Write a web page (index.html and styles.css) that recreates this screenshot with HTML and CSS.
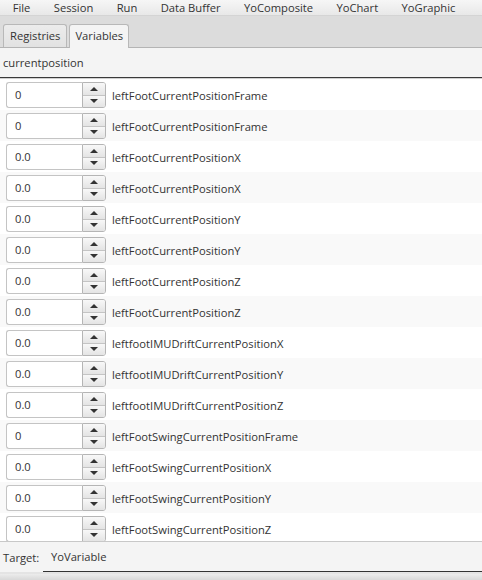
FILE: index.html
```html
<!DOCTYPE html>
<html lang="en">
<head>
  <meta charset="UTF-8">
  <title>Variables</title>
  <link rel="stylesheet" href="styles.css">
</head>
<body>
  <div class="window">
    <div class="menubar">
      <span class="menu">File</span>
      <span class="menu">Session</span>
      <span class="menu">Run</span>
      <span class="menu">Data Buffer</span>
      <span class="menu">YoComposite</span>
      <span class="menu">YoChart</span>
      <span class="menu">YoGraphic</span>
    </div>

    <div class="tab-header">
      <div class="tab">Registries</div>
      <div class="tab selected">Variables</div>
    </div>

    <div class="search">
      <div class="search-field">currentposition</div>
    </div>

    <div class="list" id="list"></div>

    <div class="target">
      <span class="target-label">Target:</span>
      <div class="target-field">YoVariable</div>
    </div>
    <div class="bottom-strip"></div>
  </div>

  <script>
    const variables = [
      ['0', 'leftFootCurrentPositionFrame'],
      ['0', 'leftFootCurrentPositionFrame'],
      ['0.0', 'leftFootCurrentPositionX'],
      ['0.0', 'leftFootCurrentPositionX'],
      ['0.0', 'leftFootCurrentPositionY'],
      ['0.0', 'leftFootCurrentPositionY'],
      ['0.0', 'leftFootCurrentPositionZ'],
      ['0.0', 'leftFootCurrentPositionZ'],
      ['0.0', 'leftfootIMUDriftCurrentPositionX'],
      ['0.0', 'leftfootIMUDriftCurrentPositionY'],
      ['0.0', 'leftfootIMUDriftCurrentPositionZ'],
      ['0', 'leftFootSwingCurrentPositionFrame'],
      ['0.0', 'leftFootSwingCurrentPositionX'],
      ['0.0', 'leftFootSwingCurrentPositionY'],
      ['0.0', 'leftFootSwingCurrentPositionZ']
    ];

    const list = document.getElementById('list');
    variables.forEach(([value, name]) => {
      const row = document.createElement('div');
      row.className = 'row';
      row.innerHTML =
        '<div class="spinner">' +
          '<div class="spinner-value">' + value + '</div>' +
          '<div class="spinner-buttons">' +
            '<div class="arrow-btn"><span class="arrow up"></span></div>' +
            '<div class="arrow-btn"><span class="arrow down"></span></div>' +
          '</div>' +
        '</div>' +
        '<span class="var-name">' + name + '</span>';
      list.appendChild(row);
    });
  </script>
</body>
</html>
```

FILE: styles.css
```css
* {
  margin: 0;
  padding: 0;
  box-sizing: border-box;
}

body {
  font-family: 'Open Sans', 'Noto Sans', sans-serif;
  font-size: 11.2px;
  color: #333;
  background-color: #f4f4f4;
}

.window {
  width: 482px;
  height: 580px;
  overflow: hidden;
  display: flex;
  flex-direction: column;
}

/* menu bar */
.menubar {
  height: 16px;
  display: flex;
  align-items: center;
  padding-left: 1px;
  background: linear-gradient(#f6f6f6, #e8e8e8);
  border-bottom: 1px solid #d4d4d4;
  flex-shrink: 0;
  white-space: nowrap;
}

.menu {
  padding: 0 11.7px;
  line-height: 15px;
}

/* tabs */
.tab-header {
  height: 32px;
  display: flex;
  align-items: flex-end;
  gap: 2px;
  padding-left: 3px;
  background-color: #dcdcdc;
  border-bottom: 1px solid #b4b4b4;
  flex-shrink: 0;
}

.tab {
  height: 23px;
  padding: 0 6px;
  line-height: 22px;
  border: 1px solid #b8b8b8;
  border-bottom: none;
  border-radius: 3px 3px 0 0;
  background: linear-gradient(#ececec, #e2e2e2);
}

.tab.selected {
  height: 24px;
  padding: 0 5px;
  margin-bottom: -1px;
  background: #f4f4f4;
}

/* search */
.search {
  height: 31px;
  background-color: #f4f4f4;
  border-bottom: 1px solid #d0d0d0;
  flex-shrink: 0;
}

.search-field {
  height: 30px;
  line-height: 30px;
  padding-left: 3px;
  border-bottom: 1px solid #3a3a3a;
}

/* variable list */
.list {
  height: 462px;
  overflow: hidden;
  background-color: #fff;
  flex-shrink: 0;
}

.row {
  height: 31px;
  display: flex;
  align-items: center;
  padding-left: 6px;
  padding-top: 1px;
}

.row:nth-child(even) {
  background-color: #f9f9f9;
}

.spinner {
  display: flex;
  width: 100px;
  height: 26px;
}

.spinner-value {
  width: 76px;
  padding-left: 8px;
  line-height: 24px;
  background-color: #fff;
  border: 1px solid #c4c4c4;
  border-right: none;
  border-radius: 3px 0 0 3px;
}

.spinner-buttons {
  width: 24px;
  display: flex;
  flex-direction: column;
  border: 1px solid #b5b5b5;
  border-radius: 0 3px 3px 0;
  overflow: hidden;
}

.arrow-btn {
  flex: 1;
  display: flex;
  align-items: center;
  justify-content: center;
  background: linear-gradient(#f8f8f8, #e4e4e4);
}

.arrow-btn + .arrow-btn {
  border-top: 1px solid #c4c4c4;
}

.arrow {
  width: 0;
  height: 0;
  border-left: 4px solid transparent;
  border-right: 4px solid transparent;
}

.arrow.up {
  border-bottom: 4px solid #333;
}

.arrow.down {
  border-top: 4px solid #333;
}

.var-name {
  margin-left: 6px;
  white-space: nowrap;
}

/* target bar */
.target {
  height: 31px;
  display: flex;
  align-items: stretch;
  background-color: #f4f4f4;
  border-top: 1px solid #c8c8c8;
  flex-shrink: 0;
}

.target-label {
  width: 43px;
  padding-left: 3px;
  line-height: 31px;
}

.target-field {
  flex: 1;
  padding-left: 8px;
  line-height: 30px;
  border-bottom: 1px solid #333;
}

.bottom-strip {
  flex: 1;
  background: linear-gradient(#ececec, #d8d8d8);
  border-top: 2px solid #e4e4e4;
}
```
